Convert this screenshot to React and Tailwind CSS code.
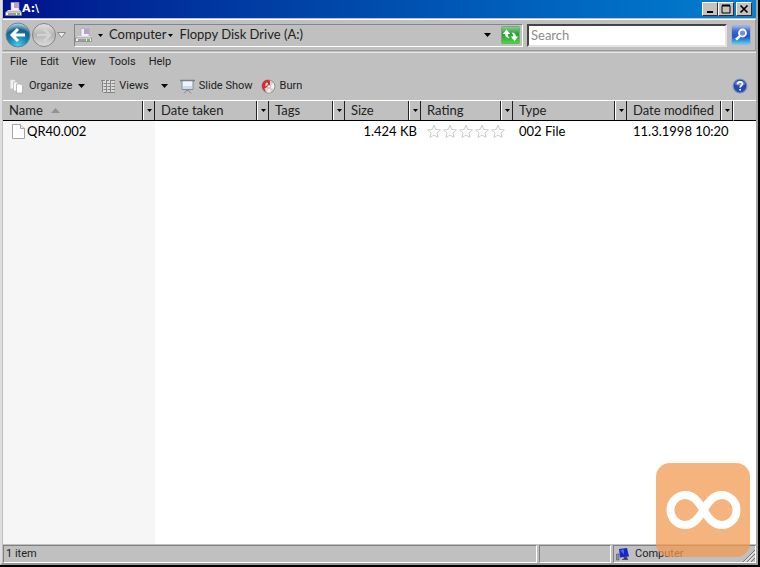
import React from "react";

const Arrow = ({ className = "" }) => (
  <svg className={`shrink-0 ${className}`} width="7" height="4" viewBox="0 0 7 4" aria-hidden="true">
    <path d="M0 0h7L3.5 4z" fill="#000" />
  </svg>
);

const SmallArrow = () => (
  <svg className="shrink-0" width="5" height="3" viewBox="0 0 5 3" aria-hidden="true">
    <path d="M0 0h5L2.5 3z" fill="#000" />
  </svg>
);

const DriveIcon = () => (
  <svg className="shrink-0" width="17" height="15" viewBox="0 0 17 15" aria-hidden="true">
    <path d="M6 .5h8v8H6z" fill="#f4eef8" stroke="#a49cac" strokeWidth=".6" />
    <path d="M9 1h5v5H9z" fill="#b9a0cc" />
    <path d="M3 8h12l1.500 2.500H.5z" fill="#dedede" />
    <path d="M.5 10h16v3.500H.5z" fill="#f4f4f4" stroke="#777" strokeWidth=".7" />
    <path d="M3 12h8" stroke="#444" />
    <path d="M12 11h3v2h-3z" fill="#6db46d" />
  </svg>
);

const NavBack = () => (
  <svg width="26" height="26" viewBox="0 0 26 26" aria-hidden="true">
    <defs>
      <radialGradient id="back" cx=".5" cy=".95" r=".9">
        <stop offset="0" stopColor="#45cdea" />
        <stop offset=".5" stopColor="#157fae" />
        <stop offset=".75" stopColor="#17608c" />
        <stop offset="1" stopColor="#a6cbdf" />
      </radialGradient>
    </defs>
    <circle cx="13" cy="13" r="12" fill="url(#back)" stroke="#6c8796" />
    <path d="M13 7L7 13l6 6M8 13h12" fill="none" stroke="#fff" strokeWidth="3" />
  </svg>
);

const NavForward = () => (
  <svg width="26" height="26" viewBox="0 0 26 26" aria-hidden="true">
    <defs>
      <linearGradient id="fwd" x2="0" y2="1">
        <stop offset="0" stopColor="#e2e2e2" />
        <stop offset=".5" stopColor="#b4b4b4" />
        <stop offset="1" stopColor="#dedede" />
      </linearGradient>
    </defs>
    <circle cx="13" cy="13" r="11.500" fill="url(#fwd)" stroke="#858585" />
    <path d="M13 7l6 6-6 6M18 13H6" fill="none" stroke="#d3d3d3" strokeWidth="2.500" />
  </svg>
);

const RefreshIcon = () => (
  <svg width="19" height="18" viewBox="0 0 19 18" aria-hidden="true">
    <defs>
      <linearGradient id="green" x2="0" y2="1">
        <stop offset="0" stopColor="#8bcf8d" />
        <stop offset=".45" stopColor="#2c9a3b" />
        <stop offset="1" stopColor="#46dc35" />
      </linearGradient>
    </defs>
    <rect x=".5" y=".5" width="18" height="17" rx="1" fill="url(#green)" stroke="#7aa97a" />
    <path d="M5.500 3.500L1.800 8h2.300c0 2.800 1.700 4 4.500 4C7.300 11 6.900 9.800 6.900 8h2.300z" fill="#fff" />
    <path d="M13.500 15l3.700-4.500h-2.300c0-2.800-1.700-4-4.500-4 1.300 1 1.700 2.200 1.700 4H9.800z" fill="#fff" />
  </svg>
);

const SearchIcon = () => (
  <svg width="20" height="20" viewBox="0 0 20 20" aria-hidden="true">
    <defs>
      <linearGradient id="srch" x2="0" y2="1">
        <stop offset="0" stopColor="#a7b9ee" />
        <stop offset=".3" stopColor="#3d66d2" />
        <stop offset=".6" stopColor="#2456c6" />
        <stop offset="1" stopColor="#54dcf6" />
      </linearGradient>
    </defs>
    <rect x=".5" y=".5" width="19" height="19" rx="2" fill="url(#srch)" stroke="#9fb4d4" />
    <circle cx="11.500" cy="8" r="3.500" fill="#6f92e6" stroke="#fff" strokeWidth="1.800" />
    <path d="M9 11l-4 3.500" stroke="#fff" strokeWidth="2.400" />
  </svg>
);

const OrganizeIcon = () => (
  <svg width="13" height="15" viewBox="0 0 13 15" aria-hidden="true">
    <path d="M.5 1h4.500v8.500H.5z" fill="#f1f1f1" stroke="#dcdcdc" strokeWidth=".6" />
    <path d="M3.500 3H8v9H3.500z" fill="#f8f8f8" stroke="#b4b4b4" strokeWidth=".7" />
    <path d="M6.500 5H11l1.500 1.500V14h-6z" fill="#fff" stroke="#a4a4a4" strokeWidth=".7" />
  </svg>
);

const ViewsIcon = () => (
  <svg width="14" height="14" viewBox="0 0 14 14" aria-hidden="true">
    <path d="M1 1h12v12H1z" fill="#dcdcdc" />
    <path d="M1.500 1v12M5.500 1v12M9.500 1v12" stroke="#858585" />
    <path d="M0 1.500h4M5 1.500h3M9 1.500h5M2.500 4.500H5M6.500 4.500H9M10.500 4.500H14M2.500 7.500H5M6.500 7.500H9M10.500 7.500H14M2.500 10.500H5M6.500 10.500H9M10.500 10.500H14M2.500 13.500H14" stroke="#858585" />
  </svg>
);

const SlideIcon = () => (
  <svg width="15" height="15" viewBox="0 0 15 15" aria-hidden="true">
    <path d="M7.500 10v2M7 11l-3 3.500M8 11l3 3.500" stroke="#888" />
    <path d="M2 1.500h11v9H2z" fill="#f0f4f8" stroke="#7b8b98" />
    <path d="M3 7h9v3H3z" fill="#cbdbe8" />
    <path d="M0 1.500h15" stroke="#71818f" strokeWidth="1.500" />
  </svg>
);

const BurnIcon = () => (
  <svg width="15" height="15" viewBox="0 0 15 15" aria-hidden="true">
    <circle cx="7.500" cy="7.500" r="6.500" fill="#d6d3d3" stroke="#929292" />
    <path d="M8 8l5-4v6z" fill="#f4f4f4" />
    <path d="M8 8l-2 5.500h4z" fill="#eee" />
    <path d="M7 .8C2 1 .5 5 1.200 8.500 2 11 3 12 5 13L3.500 9.500 6 8l3-2V2z" fill="#d42c30" />
    <path d="M4.500 4.500c1.500-2 3.500-.5 2 1.500L4.300 7.500z" fill="#ffd6d0" />
    <circle cx="8" cy="7.500" r="1.600" fill="#fff" stroke="#a88" strokeWidth=".6" />
  </svg>
);

const HelpIcon = () => (
  <svg width="16" height="16" viewBox="0 0 16 16" aria-hidden="true">
    <circle cx="8" cy="8" r="7" fill="#2449b4" stroke="#8597bd" strokeWidth="1.200" />
    <path d="M3 6a5.500 5.500 0 0 1 10 0C10 8 6 8 3 6z" fill="#7892df" />
    <path d="M5.700 6.200C5.700 3 10.500 3.200 10.400 6 10.300 7.500 8.200 7.700 8.100 9.500" fill="none" stroke="#fff" strokeWidth="1.700" />
    <circle cx="8.100" cy="11.800" r="1" fill="#fff" />
  </svg>
);

const Star = () => (
  <svg width="16" height="15" viewBox="0 0 16 15" aria-hidden="true">
    <path d="M7 1.200l1.800 4.300 4.600.4-3.500 3 1.100 4.600-4-2.500-4 2.500 1.100-4.600-3.500-3 4.600-.4z" fill="#fff" stroke="#cbcbcb" />
  </svg>
);

const FileIcon = () => (
  <svg className="shrink-0" width="13" height="15" viewBox="0 0 13 15" aria-hidden="true">
    <path d="M.5.500h8l4 4v10H.5z" fill="#fff" stroke="#a5a5a5" />
    <path d="M8.500.500v4h4" fill="#eee" stroke="#a5a5a5" />
  </svg>
);

const ComputerIcon = () => (
  <svg className="shrink-0" width="15" height="13" viewBox="0 0 15 13" aria-hidden="true">
    <path d="M.5 6h2.500v6H.5z" fill="#8993a0" stroke="#555" strokeWidth=".6" />
    <path d="M3 1l8-1 2 8.500-9 1z" fill="#1428cc" />
    <path d="M4 2l4-.5v5z" fill="#496aef" />
    <path d="M8 9.500h3v1.500H8zM6 11.500h6" stroke="#555" />
  </svg>
);

const columns = [
  ["Name", "w-[152px]"],
  ["Date taken", "w-[114px]"],
  ["Tags", "w-[76px]"],
  ["Size", "w-[76px]"],
  ["Rating", "w-[92px]"],
  ["Type", "w-[114px]"],
  ["Date modified", "w-[106px]"],
];

const captionButton =
  "flex h-[14px] w-4 items-center justify-center border border-t-white border-l-white border-r-[#303030] border-b-[#303030] bg-[#c6c3bf]";

const commands = "flex items-center whitespace-nowrap";

export default function App() {
  return (
    <div className="relative flex min-h-screen flex-col border-r-2 border-b-2 border-black bg-[#c0c0c0] font-['Roboto',sans-serif] text-[11px] text-[#222]">
      <div className="flex grow flex-col border-r-2 border-b-2 border-l-2 border-r-[#a5a5a5] border-b-[#989898] border-l-[#dedede]">
        <header className="ml-px flex h-[18px] items-center justify-between bg-linear-to-r from-[#00108c] to-[#0d7fd0] pr-1 pl-0.5">
          <div className="flex items-center">
            <DriveIcon />
            <h1 className="font-['DejaVu_Sans',sans-serif] text-[11px] font-bold text-white">A:\</h1>
          </div>
          <div className="flex">
            <button type="button" aria-label="Minimize" className={captionButton}>
              <svg width="10" height="10" viewBox="0 0 10 10"><path d="M2 8h6" stroke="#000" strokeWidth="2" /></svg>
            </button>
            <button type="button" aria-label="Maximize" className={captionButton}>
              <svg width="10" height="10" viewBox="0 0 10 10"><path d="M1 1.500h8v7.500H1z" fill="none" stroke="#000" /><path d="M1 1.500h8" stroke="#000" strokeWidth="2" /></svg>
            </button>
            <button type="button" aria-label="Close" className={`${captionButton} ml-0.5`}>
              <svg width="10" height="10" viewBox="0 0 10 10"><path d="M1.500 1.500l7 7M8.500 1.500l-7 7" stroke="#000" strokeWidth="1.700" /></svg>
            </button>
          </div>
        </header>

        <div className="mt-px ml-px flex h-8 items-center border-t border-r border-b border-t-white border-r-[#999] border-b-[#999] px-0.5 font-['Lato',sans-serif] text-[13px]">
          <button type="button" aria-label="Back"><NavBack /></button>
          <button type="button" aria-label="Forward"><NavForward /></button>
          <button type="button" aria-label="Recent pages">
            <svg width="9" height="6" viewBox="0 0 9 6"><path d="M.5.500h8l-4 5z" fill="#eee" stroke="#888" /></svg>
          </button>
          <nav aria-label="Address" className="ml-2 flex h-[23px] min-w-0 grow items-center border border-t-[#858585] border-r-white border-b-white border-l-[#858585]">
            <DriveIcon />
            <button type="button" aria-label="Locations" className="mx-1 p-0.5"><SmallArrow /></button>
            <a href="#computer">Computer</a>
            <button type="button" aria-label="Subfolders" className="p-0.5"><SmallArrow /></button>
            <a href="#drive" className="ml-1 whitespace-nowrap">Floppy Disk Drive (A:)</a>
            <button type="button" aria-label="Previous locations" className="mr-2 ml-auto p-0.5"><Arrow /></button>
            <button type="button" aria-label="Refresh" className="mr-0.5"><RefreshIcon /></button>
          </nav>
          <input type="search" aria-label="Search" placeholder="Search" className="ml-1 h-[23px] w-[200px] shrink-0 border-2 border-t-[#444] border-r-[#e4e4e4] border-b-[#e4e4e4] border-l-[#444] bg-white px-0.5 outline-none placeholder:text-[#8c8c8c]" />
          <button type="button" aria-label="Start search" className="mr-0.5 ml-1"><SearchIcon /></button>
        </div>

        <nav aria-label="Menu" className="mt-px flex h-5 items-center gap-[13px] border-t border-[#e8e8e8] pl-2">
          <button type="button">File</button>
          <button type="button">Edit</button>
          <button type="button">View</button>
          <button type="button">Tools</button>
          <button type="button">Help</button>
        </nav>

        <div className="flex h-7 items-center pr-2 pl-2">
          <button type="button" className={`${commands} gap-1.5`}><OrganizeIcon />Organize<Arrow /></button>
          <button type="button" className={`${commands} ml-4 gap-1`}><ViewsIcon />Views<Arrow className="ml-2" /></button>
          <button type="button" className={`${commands} ml-3 gap-1`}><SlideIcon />Slide Show</button>
          <button type="button" className={`${commands} ml-2 gap-1`}><BurnIcon />Burn</button>
          <button type="button" aria-label="Help" className="ml-auto"><HelpIcon /></button>
        </div>

        <main className="ml-px flex grow flex-col bg-[linear-gradient(to_right,#f6f6f6_152px,#fff_152px)] font-['Lato',sans-serif] text-[13px] text-black">
          <table className="w-full table-fixed border-separate border-spacing-0">
            <thead>
              <tr className="bg-[#c0c0c0] text-left text-[#222]">
                {columns.map(([label, width]) => (
                  <th key={label} scope="col" className={`${width} h-[21px] border-t border-b border-t-white border-b-black p-0 font-normal`}>
                    <div className="flex h-[19px] items-stretch">
                      <button type="button" className="flex min-w-0 grow items-center gap-2 border-r border-[#222] pl-[6px] whitespace-nowrap">
                        {label}
                        {label === "Name" && (
                          <svg width="9" height="5" viewBox="0 0 9 5"><path d="M0 5h9L4.500 0z" fill="#929292" /></svg>
                        )}
                      </button>
                      <button type="button" aria-label={`Filter ${label}`} className="flex w-3 shrink-0 items-center justify-center border-r border-l border-r-[#222] border-l-white"><SmallArrow /></button>
                    </div>
                  </th>
                ))}
                <td className="border-t border-b border-l border-t-white border-b-black border-l-white" />
              </tr>
            </thead>
            <tbody>
              <tr className="h-[21px] whitespace-nowrap">
                <td className="p-0 pl-[9px]"><div className="flex items-center gap-0.5"><FileIcon />QR40.002</div></td>
                <td />
                <td />
                <td className="p-0 pr-1 text-right">1.424 KB</td>
                <td className="p-0 pl-[6px]"><div className="flex" role="img" aria-label="Unrated"><Star /><Star /><Star /><Star /><Star /></div></td>
                <td className="p-0 pl-[6px]">002 File</td>
                <td className="p-0 pl-[6px]">11.3.1998 10:20</td>
                <td />
              </tr>
            </tbody>
          </table>
        </main>

        <footer className="ml-px flex h-[19px] gap-0.5 pt-px">
          <div className="flex grow items-center border border-t-[#808080] border-r-white border-b-white border-l-[#808080] pl-0.5">1 item</div>
          <div className="w-[72px] border border-t-[#808080] border-r-white border-b-white border-l-[#808080]" />
          <div className="flex w-[143px] items-center gap-1 border border-t-[#808080] border-r-white border-b-white border-l-[#808080] pl-0.5">
            <ComputerIcon />Computer
            <svg className="ml-auto self-end" width="12" height="12" viewBox="0 0 12 12" aria-hidden="true">
              <path d="M0 12L12 0M4 12l8-8M8 12l4-4" stroke="#777" />
              <path d="M1.500 12L12 1.500M5.500 12L12 5.500" stroke="#fff" />
            </svg>
          </div>
        </footer>
      </div>

      <svg className="absolute right-2 bottom-2" width="94" height="94" viewBox="0 0 94 94" role="img" aria-label="Infinity logo">
        <rect width="94" height="94" rx="14" fill="#f29a51" fillOpacity=".74" />
        <path d="M47.500 47C42 37.500 37 32 29.500 32a15 15 0 0 0 0 30C37 62 42 56.500 47.500 47S58 32 65.500 32a15 15 0 0 1 0 30C58 62 53 56.500 47.500 47z" fill="none" stroke="#fff" strokeWidth="8" />
      </svg>
    </div>
  );
}
